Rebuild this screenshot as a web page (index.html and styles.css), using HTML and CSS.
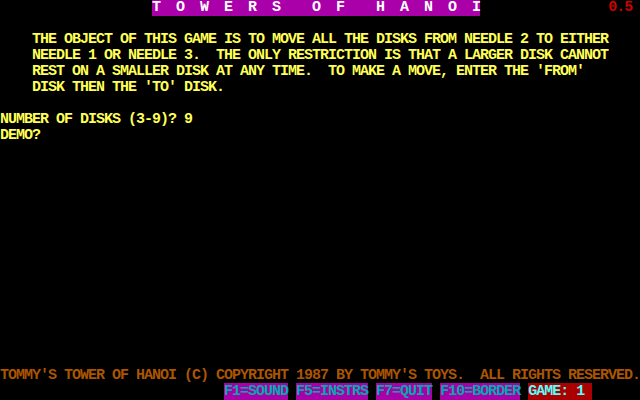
FILE: index.html
```html
<!DOCTYPE html>
<html>
<head>
<meta charset="utf-8">
<link rel="stylesheet" href="styles.css">
</head>
<body>
<div class="screen">
<div class="row">                   <span class="title">T  O  W  E  R  S    O  F    H  A  N  O  I</span>                <span class="ver">0.5</span></div>
<div class="row"> </div>
<div class="row yellow">    THE OBJECT OF THIS GAME IS TO MOVE ALL THE DISKS FROM NEEDLE 2 TO EITHER</div>
<div class="row yellow">    NEEDLE 1 OR NEEDLE 3.  THE ONLY RESTRICTION IS THAT A LARGER DISK CANNOT</div>
<div class="row yellow">    REST ON A SMALLER DISK AT ANY TIME.  TO MAKE A MOVE, ENTER THE 'FROM'</div>
<div class="row yellow">    DISK THEN THE 'TO' DISK.</div>
<div class="row"> </div>
<div class="row yellow">NUMBER OF DISKS (3-9)? 9</div>
<div class="row yellow">DEMO?</div>
<div class="row"> </div>
<div class="row"> </div>
<div class="row"> </div>
<div class="row"> </div>
<div class="row"> </div>
<div class="row"> </div>
<div class="row"> </div>
<div class="row"> </div>
<div class="row"> </div>
<div class="row"> </div>
<div class="row"> </div>
<div class="row"> </div>
<div class="row"> </div>
<div class="row"> </div>
<div class="row brown">TOMMY'S TOWER OF HANOI (C) COPYRIGHT 1987 BY TOMMY'S TOYS.  ALL RIGHTS RESERVED.</div>
<div class="row">                            <span class="fkey">F1=SOUND</span> <span class="fkey">F5=INSTRS</span> <span class="fkey">F7=QUIT</span> <span class="fkey">F10=BORDER</span> <span class="game">GAME: 1 </span></div>
</div>
</body>
</html>
```
FILE: styles.css
```css
html, body {
  margin: 0;
  padding: 0;
  background: #000;
}
.screen {
  width: 640px;
  height: 400px;
  overflow: hidden;
  background: #000;
  font-family: "Liberation Mono", "DejaVu Sans Mono", monospace;
  font-weight: bold;
  font-size: 15px;
  letter-spacing: -1px;
  color: #aaaaaa;
}
.row {
  height: 16px;
  line-height: 16px;
  white-space: pre;
}
.title {
  background: #aa00aa;
  color: #ffffff;
}
.ver {
  color: #cc0000;
}
.yellow {
  color: #ffff55;
}
.brown {
  color: #aa5500;
}
.fkey {
  background: #aa00aa;
  color: #00aaaa;
}
.game {
  background: #aa0000;
  color: #55ffff;
}
```
